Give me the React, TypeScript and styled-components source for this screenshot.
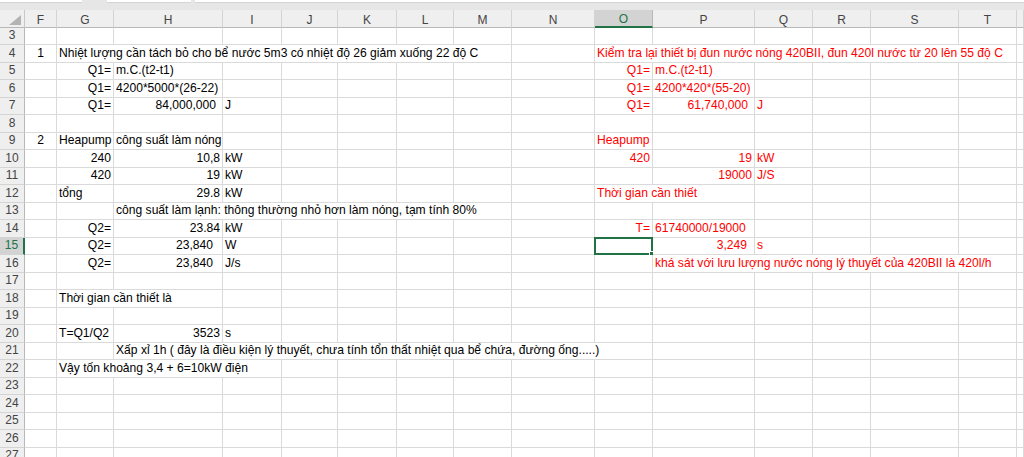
import React from "react";
import styled, { createGlobalStyle, css } from "styled-components";

const GlobalStyle = createGlobalStyle`
  html, body { margin: 0; padding: 0; background: #ffffff; }
  body { font-family: "Liberation Sans", Arial, sans-serif; overflow: hidden; }
  * { box-sizing: border-box; }
`;

const COLS = ["F", "G", "H", "I", "J", "K", "L", "M", "N", "O", "P", "Q", "R", "S", "T", "U"];
const TEMPLATE =
  "25px 32px 57px 109px 59px 56px 59px 57px 58px 83px 58px 102px 58px 58px 88px 58px 1fr";

const GRID = "#dadada";
const HEAD_BG = "#efefef";
const HEAD_SEL_BG = "#d3d3d3";
const GREEN = "#217346";

type Align = "left" | "right" | "center";
type CellDef = {
  col: string;
  text?: string;
  span?: number;
  align?: Align;
  red?: boolean;
  pad?: number;
  selected?: boolean;
};

const rows: Record<number, CellDef[]> = {
  4: [
    { col: "F", text: "1", align: "center" },
    { col: "G", span: 7, text: "Nhiệt lượng cần tách bỏ cho bể nước 5m3 có nhiệt độ 26 giảm xuống 22 độ C" },
    { col: "O", span: 6, red: true, text: "Kiểm tra lại thiết bị đun nước nóng 420BII, đun 420l nước từ 20 lên 55 độ C" },
  ],
  5: [
    { col: "G", text: "Q1=", align: "right" },
    { col: "H", text: "m.C.(t2-t1)" },
    { col: "O", text: "Q1=", align: "right", red: true },
    { col: "P", text: "m.C.(t2-t1)", red: true },
  ],
  6: [
    { col: "G", text: "Q1=", align: "right" },
    { col: "H", text: "4200*5000*(26-22)" },
    { col: "O", text: "Q1=", align: "right", red: true },
    { col: "P", text: "4200*420*(55-20)", red: true },
  ],
  7: [
    { col: "G", text: "Q1=", align: "right" },
    { col: "H", text: "84,000,000", align: "right", pad: 6 },
    { col: "I", text: "J" },
    { col: "O", text: "Q1=", align: "right", red: true },
    { col: "P", text: "61,740,000", align: "right", pad: 6, red: true },
    { col: "Q", text: "J", red: true },
  ],
  9: [
    { col: "F", text: "2", align: "center" },
    { col: "G", text: "Heapump" },
    { col: "H", text: "công suất làm nóng" },
    { col: "O", text: "Heapump", red: true },
  ],
  10: [
    { col: "G", text: "240", align: "right" },
    { col: "H", text: "10,8", align: "right" },
    { col: "I", text: "kW" },
    { col: "O", text: "420", align: "right", red: true },
    { col: "P", text: "19", align: "right", red: true },
    { col: "Q", text: "kW", red: true },
  ],
  11: [
    { col: "G", text: "420", align: "right" },
    { col: "H", text: "19", align: "right" },
    { col: "I", text: "kW" },
    { col: "P", text: "19000", align: "right", red: true },
    { col: "Q", text: "J/S", red: true },
  ],
  12: [
    { col: "G", text: "tổng" },
    { col: "H", text: "29.8", align: "right" },
    { col: "I", text: "kW" },
    { col: "O", span: 2, text: "Thời gian cần thiết", red: true },
  ],
  13: [
    { col: "H", span: 6, text: "công suất làm lạnh: thông thường nhỏ hơn làm nóng, tạm tính 80%" },
  ],
  14: [
    { col: "G", text: "Q2=", align: "right" },
    { col: "H", text: "23.84", align: "right" },
    { col: "I", text: "kW" },
    { col: "O", text: "T=", align: "right", red: true },
    { col: "P", text: "61740000/19000", red: true },
  ],
  15: [
    { col: "G", text: "Q2=", align: "right" },
    { col: "H", text: "23,840", align: "right", pad: 9 },
    { col: "I", text: "W" },
    { col: "O", selected: true },
    { col: "P", text: "3,249", align: "right", pad: 7, red: true },
    { col: "Q", text: "s", red: true },
  ],
  16: [
    { col: "G", text: "Q2=", align: "right" },
    { col: "H", text: "23,840", align: "right", pad: 9 },
    { col: "I", text: "J/s" },
    { col: "P", span: 5, red: true, text: "khá sát với lưu lượng nước nóng lý thuyết của 420BII là 420l/h" },
  ],
  18: [{ col: "G", span: 2, text: "Thời gian cần thiết là" }],
  20: [
    { col: "G", text: "T=Q1/Q2" },
    { col: "H", text: "3523", align: "right" },
    { col: "I", text: "s" },
  ],
  21: [
    {
      col: "H",
      span: 8,
      text: "Xấp xỉ 1h ( đây là điều kiện lý thuyết, chưa tính tổn thất nhiệt qua bể chứa, đường ống.....)",
    },
  ],
  22: [{ col: "G", span: 3, text: "Vậy tốn khoảng 3,4 + 6=10kW điện" }],
};

const ROW_NUMBERS = Array.from({ length: 25 }, (_, i) => i + 3);
const SELECTED_COL = "O";
const SELECTED_ROW = 15;
const HIDDEN_HEAD = "U";

const Page = styled.div`
  width: 1024px;
  height: 457px;
  overflow: hidden;
  background: #ffffff;
  display: flex;
  flex-direction: column;
`;

const TopBar = styled.div`
  height: 10px;
  flex: none;
  background: #e6e6e6;
  display: flex;
  gap: 4px;
  align-items: flex-start;
`;

const TopBox = styled.div<{ $w?: number; $ml?: number }>`
  height: 3px;
  background: #ffffff;
  border-bottom: 1px solid #d4d4d4;
  ${(p) => (p.$w ? css`width: ${p.$w}px;` : css`flex: 1;`)}
  ${(p) => p.$ml && css`margin-left: ${p.$ml}px;`}
`;

const Grid = styled.div`
  display: grid;
  grid-template-columns: ${TEMPLATE};
  font-size: 12.1px;
  color: #000000;
`;

const HeaderRow = styled(Grid)`
  height: 17.5px;
  flex: none;
  font-size: 12px;
`;

const Corner = styled.div`
  background: ${HEAD_BG};
  border-right: 1px solid #c8c8c8;
  border-bottom: 1px solid #b8b8b8;
  display: flex;
  align-items: flex-end;
  justify-content: flex-end;
  padding: 0 3px 2px 0;
`;

const ColHead = styled.div<{ $sel?: boolean }>`
  background: ${(p) => (p.$sel ? HEAD_SEL_BG : HEAD_BG)};
  color: ${(p) => (p.$sel ? GREEN : "#444444")};
  border-right: 1px solid ${(p) => (p.$sel ? "#b8b8b8" : "#d4d4d4")};
  border-bottom: ${(p) => (p.$sel ? `2px solid ${GREEN}` : "1px solid #b8b8b8")};
  display: flex;
  align-items: center;
  justify-content: center;
  padding-top: 3px;
  overflow: hidden;
`;

const SheetRow = styled(Grid)`
  height: 17.5px;
  flex: none;
`;

const RowHead = styled.div<{ $sel?: boolean }>`
  background: ${(p) => (p.$sel ? HEAD_SEL_BG : HEAD_BG)};
  color: ${(p) => (p.$sel ? GREEN : "#444444")};
  border-right: ${(p) => (p.$sel ? `2px solid ${GREEN}` : "1px solid #b8b8b8")};
  border-bottom: 1px solid #d4d4d4;
  display: flex;
  align-items: flex-end;
  justify-content: center;
  padding-bottom: 1px;
  line-height: 15px;
  font-size: 12px;
`;

const Cell = styled.div<{ $align: Align; $red?: boolean; $pad: number; $span: number }>`
  position: relative;
  grid-column: span ${(p) => p.$span};
  border-right: 1px solid ${GRID};
  border-bottom: 1px solid ${GRID};
  display: flex;
  align-items: flex-end;
  justify-content: ${(p) =>
    p.$align === "right" ? "flex-end" : p.$align === "center" ? "center" : "flex-start"};
  padding: 0 ${(p) => p.$pad}px 1px 2px;
  line-height: 15px;
  white-space: nowrap;
  color: ${(p) => (p.$red ? "#ff0000" : "#000000")};
`;

const Selection = styled.div`
  position: absolute;
  left: -1px;
  top: -1px;
  right: -1px;
  bottom: -1px;
  border: 2px solid ${GREEN};
  pointer-events: none;
`;

const Handle = styled.div`
  position: absolute;
  right: -3px;
  bottom: -3px;
  width: 5px;
  height: 5px;
  background: ${GREEN};
  border: 1px solid #ffffff;
`;

function buildRow(r: number) {
  const defs = rows[r] || [];
  const out: React.ReactNode[] = [];
  let i = 0;
  while (i < COLS.length) {
    const col = COLS[i];
    const def = defs.find((d) => d.col === col);
    const span = def?.span ?? 1;
    out.push(
      <Cell
        key={col}
        $span={span}
        $align={def?.align ?? "left"}
        $red={def?.red}
        $pad={def?.pad ?? 2}
      >
        {def?.text}
        {def?.selected && (
          <Selection>
            <Handle />
          </Selection>
        )}
      </Cell>
    );
    i += span;
  }
  return out;
}

export default function App() {
  return (
    <Page>
      <GlobalStyle />
      <TopBar>
        <TopBox $w={82} />
        <TopBox $w={84} $ml={21} />
        <TopBox />
      </TopBar>
      <HeaderRow>
        <Corner>
          <svg width="12" height="10" viewBox="0 0 12 10">
            <polygon points="12,0 12,10 0,10" fill="#b4b4b4" />
          </svg>
        </Corner>
        {COLS.map((c) => (
          <ColHead key={c} $sel={c === SELECTED_COL}>
            {c === HIDDEN_HEAD ? "" : c}
          </ColHead>
        ))}
      </HeaderRow>
      {ROW_NUMBERS.map((r) => (
        <SheetRow key={r}>
          <RowHead $sel={r === SELECTED_ROW}>{r}</RowHead>
          {buildRow(r)}
        </SheetRow>
      ))}
    </Page>
  );
}
